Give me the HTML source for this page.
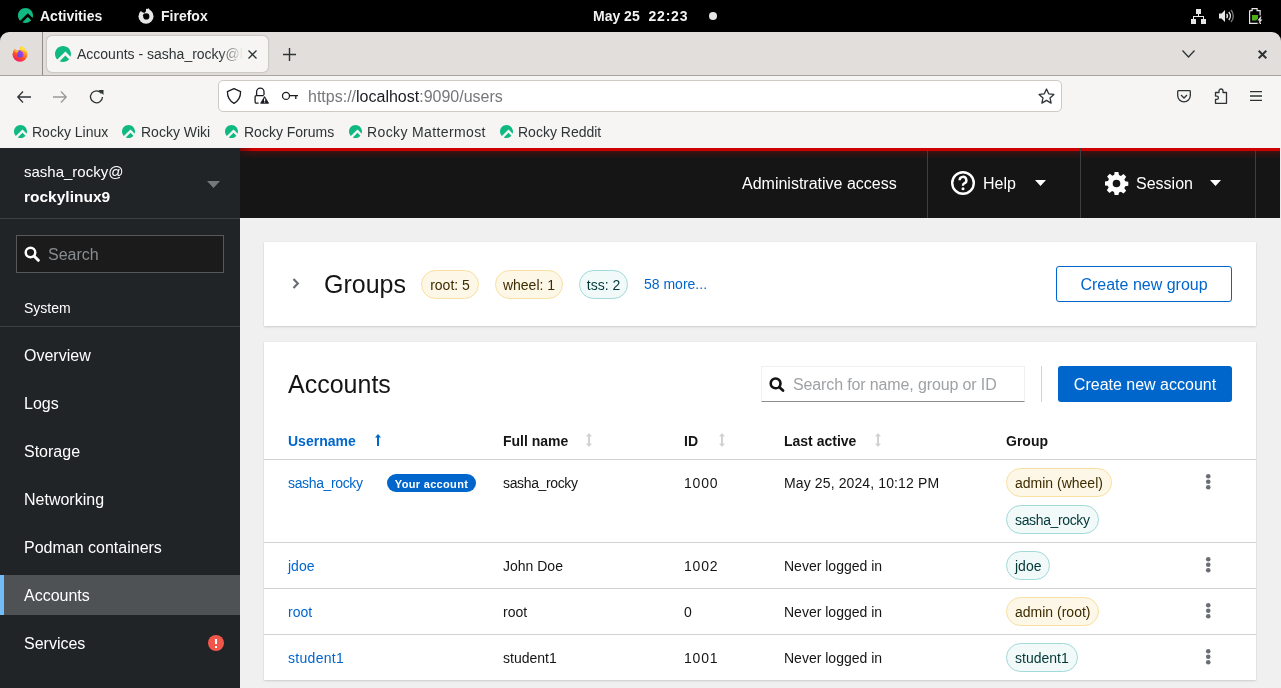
<!DOCTYPE html>
<html><head><meta charset="utf-8">
<style>
*{box-sizing:border-box;margin:0;padding:0}
html{will-change:transform}html,body{width:1281px;height:688px;overflow:hidden;background:#000;font-family:"Liberation Sans",sans-serif}
.a{position:absolute;white-space:nowrap}
svg{position:absolute;overflow:visible}
#topbar{left:0;top:0;width:1281px;height:32px;background:#000;color:#f2f2f2;font-size:14px;font-weight:bold}
#tabs{left:0;top:32px;width:1281px;height:44px;background:#e1dedb;border-radius:9px 9px 0 0;border-bottom:1px solid #a9a5a1}
#nav{left:0;top:76px;width:1281px;height:40px;background:#f6f5f4}
#bm{left:0;top:116px;width:1281px;height:32px;background:#f6f5f4;color:#2e3436;font-size:14px}
#side{left:0;top:148px;width:240px;height:540px;background:#212427;color:#fff;font-size:16px}
#mast{left:240px;top:148px;width:1040px;height:70px;background:#151515;color:#fff;font-size:16px}
#main{left:240px;top:218px;width:1041px;height:470px;background:#f0f0f0;color:#151515}
.card{position:absolute;background:#fff;box-shadow:0 1px 2px rgba(3,3,3,.14),0 0 1px rgba(3,3,3,.08)}
.lbl{position:absolute;height:29px;border-radius:15px;font-size:14px;line-height:28px;padding:0 8px;border:1px solid;text-align:center}
.gold{background:#fdf7e7;border-color:#f9e0a2;color:#3d2c00}
.cyan{background:#f2f9f9;border-color:#a2d9d9;color:#003737}
.th{position:absolute;top:91px;font-size:14px;font-weight:bold;color:#151515}
.td{position:absolute;font-size:14px;color:#151515}
.lnk{color:#0066cc}
.hr{position:absolute;left:0;width:992px;height:1px;background:#d2d2d2}
</style></head><body>
<!-- GNOME top bar -->
<div id="topbar" class="a">
  <svg style="left:18px;top:8px" width="15" height="15" viewBox="0 0 24 24"><path fill="#10b981" d="M23.332 15.957c.433-1.239.668-2.57.668-3.957 0-6.627-5.373-12-12-12S0 5.373 0 12c0 3.28 1.315 6.251 3.447 8.417L15.62 8.245l3.005 3.005zm-2.192 3.819-5.52-5.52L6.975 22.9c1.528.706 3.23 1.1 5.025 1.1 3.661 0 6.94-1.64 9.14-4.224z"/></svg>
  <div class="a" style="left:40px;top:8px">Activities</div>
  <svg style="left:134px;top:4px" width="24" height="24" viewBox="0 0 24 24"><circle cx="12" cy="12.2" r="7.5" fill="#e6e6e6"/><path fill="#e6e6e6" d="M11.6 7.6 14.3 4.1 16 6.6 19 9.5z"/><path fill="#000" d="M3 3H12.2L11.9 7.4 11 8.3 10 9.2 8.9 7.9 8 8.4 7.2 7 6.4 7.2 3 9z"/><circle cx="12.3" cy="12.4" r="3.1" fill="#000"/><path fill="#000" d="M8.7 11.6 10.2 9.6 11.5 10.2 11.6 12.8z"/></svg>
  <div class="a" style="left:161px;top:8px">Firefox</div>
  <div class="a" style="left:593px;top:8px">May 25&nbsp;&nbsp;<span style="letter-spacing:.8px;margin-left:1px">22:23</span></div>
  <div class="a" style="left:709px;top:12px;width:8px;height:8px;border-radius:4px;background:#e6e6e6"></div>
  <svg style="left:1191px;top:9px" width="15" height="15" viewBox="0 0 15 15"><g fill="#e6e6e6"><rect x="5" y="0" width="5" height="5"/><rect x="0" y="10" width="5" height="5"/><rect x="10" y="10" width="5" height="5"/><rect x="7" y="5" width="1" height="2.5"/><rect x="2" y="7" width="11" height="1"/><rect x="2" y="7" width="1" height="3"/><rect x="12" y="7" width="1" height="3"/></g></svg>
  <svg style="left:1219px;top:9px" width="16" height="14" viewBox="0 0 16 14"><path fill="#e6e6e6" d="M0 4.5h2.5L6 1v12L2.5 9.5H0z"/><path fill="none" stroke="#e6e6e6" stroke-width="1.4" d="M7.6 5a3 3 0 0 1 0 4M9.8 3a6 6 0 0 1 0 8"/><path fill="none" stroke="#777" stroke-width="1.4" d="M12 1a9 9 0 0 1 0 12"/></svg>
  <svg style="left:1249px;top:8px" width="14" height="16" viewBox="0 0 14 16"><path fill="none" stroke="#e6e6e6" stroke-width="1.2" d="M.6 2.6h2.5V.6h5v2h3v5M11.4 14.4V16M.6 2.6v12.8h8"/><path fill="#4caf1a" d="M3 7h6v3.5L7 12.5H3z"/><path fill="#e6e6e6" d="M11.5 8.5 8.5 12.5h2l-1 3.5 4-4.5h-2l1-3z"/></svg>
</div>
<!-- Firefox tab strip -->
<div id="tabs" class="a">
  <svg style="left:8px;top:10px" width="24" height="24" viewBox="0 0 24 24"><defs><linearGradient id="ffg" x1="0.25" y1="1" x2="0.8" y2="0"><stop offset="0" stop-color="#f0106a"/><stop offset=".35" stop-color="#ff4a2a"/><stop offset=".65" stop-color="#ff9622"/><stop offset="1" stop-color="#fff040"/></linearGradient><linearGradient id="ffp" x1="0" y1="1" x2=".6" y2="0"><stop offset="0" stop-color="#4b4ee0"/><stop offset="1" stop-color="#b23ee8"/></linearGradient></defs><circle cx="12" cy="12.2" r="7.5" fill="url(#ffg)"/><path fill="#ffe13f" d="M11.6 7.6 14.3 4.1 16 6.6 19 9.5z"/><path fill="#e1dedb" d="M3 3H12.2L11.9 7.4 11 8.3 10 9.2 8.9 7.9 8 8.4 7.2 7 6.4 7.2 3 9z"/><path fill="#ffb02e" d="M6.4 7.2 7.2 7 8 8.4 8.9 7.9 10 9.2 11 8.3 9.4 11 7 10z"/><circle cx="12.3" cy="12.4" r="3.1" fill="url(#ffp)"/><path fill="url(#ffp)" d="M10.2 8.2 12.4 8.4 13.5 10 11.2 10.6z"/></svg>
  <div class="a" style="left:42px;top:0;width:1px;height:43px;background:#8f8c89"></div>
  <div class="a" style="left:47px;top:4px;width:221px;height:36px;background:#f6f5f4;border-radius:5px;box-shadow:0 0 2px rgba(0,0,0,.35)">
    <svg style="left:8px;top:10px" width="16" height="16" viewBox="0 0 24 24"><path fill="#10b981" d="M23.332 15.957c.433-1.239.668-2.57.668-3.957 0-6.627-5.373-12-12-12S0 5.373 0 12c0 3.28 1.315 6.251 3.447 8.417L15.62 8.245l3.005 3.005zm-2.192 3.819-5.52-5.52L6.975 22.9c1.528.706 3.23 1.1 5.025 1.1 3.661 0 6.94-1.64 9.14-4.224z"/></svg>
    <div class="a" style="left:30px;top:10px;font-size:14px;color:#2e3436;width:166px;overflow:hidden;-webkit-mask-image:linear-gradient(90deg,#000 86%,transparent)">Accounts - sasha_rocky@localhost</div>
    <svg style="left:201px;top:14px" width="9" height="9" viewBox="0 0 9 9"><path stroke="#2e3436" stroke-width="1.3" d="M.5.5l8 8M8.5.5l-8 8"/></svg>
  </div>
  <svg style="left:283px;top:16px" width="13" height="13" viewBox="0 0 13 13"><path stroke="#2e3436" stroke-width="1.4" d="M6.5 0v13M0 6.5h13"/></svg>
  <svg style="left:1182px;top:18px" width="13" height="8" viewBox="0 0 13 8"><path fill="none" stroke="#2e3436" stroke-width="1.3" d="M.5.5l6 6.5 6-6.5"/></svg>
  <svg style="left:1258px;top:18px" width="9" height="9" viewBox="0 0 9 9"><path stroke="#2e3436" stroke-width="2" d="M.7.7l7.6 7.6M8.3.7l-7.6 7.6"/></svg>
</div>
<!-- Firefox nav toolbar -->
<div id="nav" class="a">
  <svg style="left:17px;top:15px" width="14" height="12" viewBox="0 0 14 12"><path fill="none" stroke="#2e3436" stroke-width="1.3" d="M14 6H1M6 .5.8 6 6 11.5"/></svg>
  <svg style="left:53px;top:15px" width="14" height="12" viewBox="0 0 14 12"><path fill="none" stroke="#9a9996" stroke-width="1.3" d="M0 6h13M8 .5 13.2 6 8 11.5"/></svg>
  <svg style="left:89px;top:13px" width="15" height="15" viewBox="0 0 15 15"><path fill="none" stroke="#2e3436" stroke-width="1.3" d="M12.5 4.5A6 6 0 1 0 13.5 8"/><path fill="#2e3436" d="M9.5 1h5v5z"/></svg>
  <div class="a" style="left:218px;top:4px;width:844px;height:32px;background:#fff;border:1px solid #cfc9c4;border-radius:5px">
    <svg style="left:-1px;top:-1px" width="100" height="32" viewBox="218 80 100 32"><path fill="none" stroke="#1c1b22" stroke-width="1.3" stroke-linejoin="round" d="M234 88.6 227.4 91.6C227.4 97 229.5 101 234 103.4 238.5 101 240.6 97 240.6 91.6Z"/><path fill="none" stroke="#1c1b22" stroke-width="1.3" d="M256.6 95V91.8A3.7 3.7 0 0 1 264 91.8V95M263.8 95.7H256.3Q255.1 95.7 255.1 96.9V101.9Q255.1 103.1 256.3 103.1H258.6"/><path fill="#1c1b22" stroke="#1c1b22" stroke-width=".8" stroke-linejoin="round" d="M264.6 96.6 268.6 103.3H260.6Z"/><path stroke="#fff" stroke-width="1.2" d="M264.6 98.6V100.9M264.6 101.6V102.6"/><circle cx="286" cy="95.9" r="3.5" fill="none" stroke="#1c1b22" stroke-width="1.3"/><path fill="none" stroke="#1c1b22" stroke-width="1.3" d="M289.5 95.6H298M295.8 95.6V99"/></svg>
    <div class="a" style="left:89px;top:7px;font-size:16px;color:#77767b">https://<span style="color:#1c1b22">localhost</span>:9090/users</div>
    <svg style="left:819px;top:7px" width="17" height="17" viewBox="0 0 17 17"><path fill="none" stroke="#2e3436" stroke-width="1.3" stroke-linejoin="round" d="M8.5 1l2.2 4.8 5.2.6-3.9 3.5 1.1 5.2-4.6-2.7-4.6 2.7 1.1-5.2L1.1 6.4l5.2-.6z"/></svg>
  </div>
  <svg style="left:1177px;top:14px" width="14" height="13" viewBox="0 0 14 13"><path fill="none" stroke="#2e3436" stroke-width="1.3" d="M1.4.7h11.2c.4 0 .7.3.7.7v4.2a6.3 6.3 0 0 1-12.6 0V1.4c0-.4.3-.7.7-.7z"/><path fill="none" stroke="#2e3436" stroke-width="1.3" d="M4 5l3 3 3-3"/></svg>
  <svg style="left:1214px;top:12px" width="14" height="16" viewBox="0 0 14 16"><path fill="none" stroke="#2e3436" stroke-width="1.3" stroke-linejoin="round" d="M5 4.5V3a2 2 0 0 1 4 0v1.5h3.5v10.8H1.5v-4h1.3a1.6 1.6 0 0 0 0-3.2H1.5V4.5z"/></svg>
  <svg style="left:1250px;top:15px" width="12" height="10" viewBox="0 0 12 10"><path stroke="#2e3436" stroke-width="1.3" d="M0 .7h12M0 5h12M0 9.3h12"/></svg>
</div>
<!-- Bookmarks -->
<div id="bm" class="a">
  <svg style="left:14px;top:9px" width="13" height="13" viewBox="0 0 24 24"><path fill="#10b981" d="M23.332 15.957c.433-1.239.668-2.57.668-3.957 0-6.627-5.373-12-12-12S0 5.373 0 12c0 3.28 1.315 6.251 3.447 8.417L15.62 8.245l3.005 3.005zm-2.192 3.819-5.52-5.52L6.975 22.9c1.528.706 3.23 1.1 5.025 1.1 3.661 0 6.94-1.64 9.14-4.224z"/></svg>
  <div class="a" style="left:32px;top:8px">Rocky Linux</div>
  <svg style="left:122px;top:9px" width="13" height="13" viewBox="0 0 24 24"><path fill="#10b981" d="M23.332 15.957c.433-1.239.668-2.57.668-3.957 0-6.627-5.373-12-12-12S0 5.373 0 12c0 3.28 1.315 6.251 3.447 8.417L15.62 8.245l3.005 3.005zm-2.192 3.819-5.52-5.52L6.975 22.9c1.528.706 3.23 1.1 5.025 1.1 3.661 0 6.94-1.64 9.14-4.224z"/></svg>
  <div class="a" style="left:141px;top:8px">Rocky Wiki</div>
  <svg style="left:225px;top:9px" width="13" height="13" viewBox="0 0 24 24"><path fill="#10b981" d="M23.332 15.957c.433-1.239.668-2.57.668-3.957 0-6.627-5.373-12-12-12S0 5.373 0 12c0 3.28 1.315 6.251 3.447 8.417L15.62 8.245l3.005 3.005zm-2.192 3.819-5.52-5.52L6.975 22.9c1.528.706 3.23 1.1 5.025 1.1 3.661 0 6.94-1.64 9.14-4.224z"/></svg>
  <div class="a" style="left:244px;top:8px">Rocky Forums</div>
  <svg style="left:349px;top:9px" width="13" height="13" viewBox="0 0 24 24"><path fill="#10b981" d="M23.332 15.957c.433-1.239.668-2.57.668-3.957 0-6.627-5.373-12-12-12S0 5.373 0 12c0 3.28 1.315 6.251 3.447 8.417L15.62 8.245l3.005 3.005zm-2.192 3.819-5.52-5.52L6.975 22.9c1.528.706 3.23 1.1 5.025 1.1 3.661 0 6.94-1.64 9.14-4.224z"/></svg>
  <div class="a" style="left:367px;top:8px;letter-spacing:.38px">Rocky Mattermost</div>
  <svg style="left:500px;top:9px" width="13" height="13" viewBox="0 0 24 24"><path fill="#10b981" d="M23.332 15.957c.433-1.239.668-2.57.668-3.957 0-6.627-5.373-12-12-12S0 5.373 0 12c0 3.28 1.315 6.251 3.447 8.417L15.62 8.245l3.005 3.005zm-2.192 3.819-5.52-5.52L6.975 22.9c1.528.706 3.23 1.1 5.025 1.1 3.661 0 6.94-1.64 9.14-4.224z"/></svg>
  <div class="a" style="left:518px;top:8px">Rocky Reddit</div>
</div>
<!-- Cockpit sidebar -->
<div id="side" class="a">
  <div class="a" style="left:24px;top:15px;font-size:15px">sasha_rocky@</div>
  <div class="a" style="left:24px;top:40px;font-weight:bold;font-size:15.5px">rockylinux9</div>
  <svg style="left:207px;top:33px" width="13" height="7" viewBox="0 0 13 7"><path fill="#76797c" d="M0 0h13L6.5 7z"/></svg>
  <div class="a" style="left:0;top:70px;width:240px;height:1px;background:#3c3f42"></div>
  <div class="a" style="left:16px;top:87px;width:208px;height:38px;background:#1b1b1b;border:1px solid #57585a"></div>
  <svg style="left:24px;top:98px" width="16" height="16" viewBox="0 0 16 16"><circle cx="6.5" cy="6.5" r="4.8" fill="none" stroke="#fff" stroke-width="2.4"/><path stroke="#fff" stroke-width="3" stroke-linecap="round" d="M10 10l4.3 4.3"/></svg>
  <div class="a" style="left:48px;top:98px;color:#8a8d90">Search</div>
  <div class="a" style="left:24px;top:152px;font-size:14px">System</div>
  <div class="a" style="left:0;top:178px;width:240px;height:1px;background:#3c3f42"></div>
  <div class="a" style="left:24px;top:199px">Overview</div>
  <div class="a" style="left:24px;top:247px">Logs</div>
  <div class="a" style="left:24px;top:295px">Storage</div>
  <div class="a" style="left:24px;top:343px">Networking</div>
  <div class="a" style="left:24px;top:391px">Podman containers</div>
  <div class="a" style="left:0;top:427px;width:240px;height:40px;background:#4f5255;border-left:4px solid #73bcf7"></div>
  <div class="a" style="left:24px;top:439px">Accounts</div>
  <div class="a" style="left:24px;top:487px">Services</div>
  <div class="a" style="left:208px;top:487px;width:16px;height:16px;border-radius:8px;background:#f0574a"></div>
  <div class="a" style="left:214.8px;top:491px;width:2.5px;height:5.2px;background:#fff"></div>
  <div class="a" style="left:214.8px;top:497.6px;width:2.5px;height:2.1px;background:#fff"></div>
</div>
<!-- Cockpit masthead -->
<div id="mast" class="a">
  <div class="a" style="left:0;top:0;width:1040px;height:11px;background:linear-gradient(180deg,#cc0000 0,#cc0000 3px,rgba(204,0,0,.22) 3px,rgba(204,0,0,0) 11px)"></div>
  <div class="a" style="left:0;top:0;width:14px;height:11px;background:linear-gradient(90deg,rgba(21,21,21,.45),rgba(21,21,21,0))"></div>
  <div class="a" style="left:502px;top:27px">Administrative access</div>
  <div class="a" style="left:687px;top:0;width:1px;height:70px;background:#3c3f42"></div>
  <svg style="left:711px;top:23px" width="24" height="24" viewBox="0 0 24 24"><circle cx="12" cy="12" r="10.8" fill="none" stroke="#fff" stroke-width="2.4"/><path fill="none" stroke="#fff" stroke-width="2.4" d="M8.6 9.2a3.4 3.4 0 1 1 4.6 3.2c-.9.4-1.2.9-1.2 1.8v.6"/><circle cx="12" cy="17.8" r="1.5" fill="#fff"/></svg>
  <div class="a" style="left:743px;top:27px">Help</div>
  <svg style="left:795px;top:32px" width="11" height="6" viewBox="0 0 11 6"><path fill="#fff" d="M0 0h11L5.5 6z"/></svg>
  <div class="a" style="left:840px;top:0;width:1px;height:70px;background:#3c3f42"></div>
  <svg style="left:865px;top:24px" width="23" height="23" viewBox="0 0 24 24"><path fill="#fff" d="M10 0h4l.6 3.2 2 .9 2.7-1.9 2.8 2.8-1.9 2.7.9 2 3.2.6v4l-3.2.6-.9 2 1.9 2.7-2.8 2.8-2.7-1.9-2 .9L14 24h-4l-.6-3.2-2-.9-2.7 1.9-2.8-2.8 1.9-2.7-.9-2L0 14v-4l3.2-.6.9-2-1.9-2.7 2.8-2.8 2.7 1.9 2-.9zM12 8a4 4 0 1 0 0 8 4 4 0 0 0 0-8z"/></svg>
  <div class="a" style="left:896px;top:27px">Session</div>
  <svg style="left:970px;top:32px" width="11" height="6" viewBox="0 0 11 6"><path fill="#fff" d="M0 0h11L5.5 6z"/></svg>
  <div class="a" style="left:1015px;top:0;width:1px;height:70px;background:#3c3f42"></div>
</div>
<!-- Cockpit main -->
<div id="main" class="a">
  <div class="card" style="left:24px;top:24px;width:992px;height:84px">
    <svg style="left:28px;top:36px" width="8" height="11" viewBox="0 0 8 11"><path fill="none" stroke="#6a6e73" stroke-width="2.2" d="M1.5 1l4.3 4.5L1.5 10"/></svg>
    <div class="a" style="left:60px;top:28px;font-size:25px;color:#151515">Groups</div>
    <div class="lbl gold" style="left:157px;top:28px;width:58px">root: 5</div>
    <div class="lbl gold" style="left:231px;top:28px;width:68px;padding:0">wheel: 1</div>
    <div class="lbl cyan" style="left:315px;top:28px;width:49px;padding:0">tss: 2</div>
    <div class="a lnk" style="left:380px;top:34px;font-size:14px">58 more...</div>
    <div class="a" style="left:792px;top:24px;width:176px;height:36px;border:1px solid #0066cc;border-radius:3px;color:#0066cc;font-size:16px;line-height:36px;text-align:center">Create new group</div>
  </div>
  <div class="card" style="left:24px;top:124px;width:992px;height:338px">
    <div class="a" style="left:24px;top:28px;font-size:25px;color:#151515">Accounts</div>
    <div class="a" style="left:497px;top:24px;width:264px;height:36px;border:1px solid #f0f0f0;border-bottom:1px solid #8a8d90"></div>
    <svg style="left:505px;top:35px" width="17" height="15" viewBox="0 0 17 15"><circle cx="6.6" cy="6.4" r="4.9" fill="none" stroke="#151515" stroke-width="2.6"/><path stroke="#151515" stroke-width="2.8" stroke-linecap="round" d="M10.4 10.2l3.6 3.4"/></svg>
    <div class="a" style="left:529px;top:34px;font-size:16px;color:#9fa2a5;letter-spacing:-.13px">Search for name, group or ID</div>
    <div class="a" style="left:777px;top:24px;width:1px;height:36px;background:#d2d2d2"></div>
    <div class="a" style="left:794px;top:24px;width:174px;height:36px;background:#0066cc;border-radius:3px;color:#fff;font-size:16px;line-height:37px;text-align:center">Create new account</div>

    <div class="th lnk" style="left:24px">Username</div>
    <svg style="left:111px;top:92px" width="6" height="12" viewBox="0 0 6 12"><path fill="#0066cc" d="M3 0 6 3.6H4V12H2V3.6H0z"/></svg>
    <div class="th" style="left:239px">Full name</div>
    <svg style="left:322px;top:91px" width="6" height="14" viewBox="0 0 6 14"><path fill="#d2d2d2" d="M3 0 6 3.5H4v7h2L3 14 0 10.5h2v-7H0z"/></svg>
    <div class="th" style="left:420px">ID</div>
    <svg style="left:455px;top:91px" width="6" height="14" viewBox="0 0 6 14"><path fill="#d2d2d2" d="M3 0 6 3.5H4v7h2L3 14 0 10.5h2v-7H0z"/></svg>
    <div class="th" style="left:520px">Last active</div>
    <svg style="left:611px;top:91px" width="6" height="14" viewBox="0 0 6 14"><path fill="#d2d2d2" d="M3 0 6 3.5H4v7h2L3 14 0 10.5h2v-7H0z"/></svg>
    <div class="th" style="left:742px">Group</div>
    <div class="hr" style="top:117px"></div>

    <div class="td lnk" style="left:24px;top:133px;letter-spacing:-.36px">sasha_rocky</div>
    <div class="a" style="left:123px;top:132px;width:89px;height:18px;border-radius:9px;background:#0066cc;color:#fff;font-size:11px;font-weight:bold;line-height:20px;letter-spacing:.33px;text-align:center">Your account</div>
    <div class="td" style="left:239px;top:133px;letter-spacing:-.36px">sasha_rocky</div>
    <div class="td" style="left:420px;top:133px;letter-spacing:.8px">1000</div>
    <div class="td" style="left:520px;top:133px;letter-spacing:.12px">May 25, 2024, 10:12 PM</div>
    <div class="lbl gold" style="left:742px;top:126px">admin (wheel)</div>
    <div class="lbl cyan" style="left:742px;top:163px;letter-spacing:-.36px">sasha_rocky</div>
    <svg style="left:941.75px;top:132.2px" width="5" height="16" viewBox="0 0 5 16"><g fill="#6a6e73"><circle cx="2.25" cy="2.25" r="2.3"/><circle cx="2.25" cy="7.75" r="2.3"/><circle cx="2.25" cy="13.25" r="2.3"/></g></svg>
    <div class="hr" style="top:200px"></div>

    <div class="td lnk" style="left:24px;top:216px">jdoe</div>
    <div class="td" style="left:239px;top:216px">John Doe</div>
    <div class="td" style="left:420px;top:216px;letter-spacing:.8px">1002</div>
    <div class="td" style="left:520px;top:216px">Never logged in</div>
    <div class="lbl cyan" style="left:742px;top:209px">jdoe</div>
    <svg style="left:941.75px;top:214.8px" width="5" height="16" viewBox="0 0 5 16"><g fill="#6a6e73"><circle cx="2.25" cy="2.25" r="2.3"/><circle cx="2.25" cy="7.75" r="2.3"/><circle cx="2.25" cy="13.25" r="2.3"/></g></svg>
    <div class="hr" style="top:246px"></div>

    <div class="td lnk" style="left:24px;top:262px">root</div>
    <div class="td" style="left:239px;top:262px">root</div>
    <div class="td" style="left:420px;top:262px">0</div>
    <div class="td" style="left:520px;top:262px">Never logged in</div>
    <div class="lbl gold" style="left:742px;top:255px">admin (root)</div>
    <svg style="left:941.75px;top:260.6px" width="5" height="16" viewBox="0 0 5 16"><g fill="#6a6e73"><circle cx="2.25" cy="2.25" r="2.3"/><circle cx="2.25" cy="7.75" r="2.3"/><circle cx="2.25" cy="13.25" r="2.3"/></g></svg>
    <div class="hr" style="top:292px"></div>

    <div class="td lnk" style="left:24px;top:308px;letter-spacing:.3px">student1</div>
    <div class="td" style="left:239px;top:308px">student1</div>
    <div class="td" style="left:420px;top:308px;letter-spacing:.8px">1001</div>
    <div class="td" style="left:520px;top:308px">Never logged in</div>
    <div class="lbl cyan" style="left:742px;top:301px">student1</div>
    <svg style="left:941.75px;top:307.2px" width="5" height="16" viewBox="0 0 5 16"><g fill="#6a6e73"><circle cx="2.25" cy="2.25" r="2.3"/><circle cx="2.25" cy="7.75" r="2.3"/><circle cx="2.25" cy="13.25" r="2.3"/></g></svg>
  </div>
</div>
<div class="a" style="left:1280px;top:148px;width:1px;height:70px;background:#ececec"></div>
</body></html>
